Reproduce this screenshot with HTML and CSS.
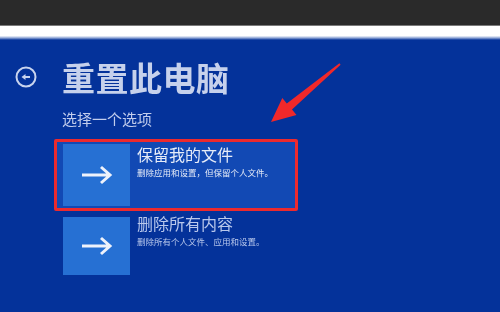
FILE: index.html
```html
<!DOCTYPE html>
<html lang="zh-CN">
<head>
    <meta charset="UTF-8">
    <meta name="viewport" content="width=device-width, initial-scale=1.0">
    <title>重置此电脑</title>
    <link rel="stylesheet" href="styles.css">
</head>
<body>

    <div class="topbar"></div>
    <div class="strip"></div>

    <div class="screen">
        <div class="header">
            <svg class="back" width="22" height="22" viewBox="0 0 22 22">
                <circle cx="11" cy="11" r="9.5" fill="none" stroke="#c9d4ee" stroke-width="2"/>
                <path d="M6.5 11 L10.5 8 L10.5 14 Z" fill="#c9d4ee"/>
                <path d="M9.5 11 H15" stroke="#c9d4ee" stroke-width="2"/>
            </svg>
            <h1 class="title">重置此电脑</h1>
        </div>
        <p class="subtitle">选择一个选项</p>

        <div class="option selected">
            <div class="tile">
                <svg width="34" height="20" viewBox="0 0 34 20">
                    <path d="M2 10 H30 M21 2 L30 10 L21 18" fill="none" stroke="#eef2fb" stroke-width="3"/>
                </svg>
            </div>
            <div class="option-text">
                <div class="option-title">保留我的文件</div>
                <div class="option-desc">删除应用和设置，但保留个人文件。</div>
            </div>
        </div>

        <div class="option second">
            <div class="tile">
                <svg width="34" height="20" viewBox="0 0 34 20">
                    <path d="M2 10 H30 M21 2 L30 10 L21 18" fill="none" stroke="#eef2fb" stroke-width="3"/>
                </svg>
            </div>
            <div class="option-text">
                <div class="option-title">删除所有内容</div>
                <div class="option-desc">删除所有个人文件、应用和设置。</div>
            </div>
        </div>
    </div>

    <!-- red pointer drawn over the screenshot -->
    <svg class="pointer" width="500" height="312" viewBox="0 0 500 312">
        <polygon points="271,122 282.3,98.1 286.8,103.4 339.4,63.2 340.6,64.8 292,109.6 296.5,114.9" fill="#f0282a"/>
    </svg>

</body>
</html>
```

FILE: styles.css
```css
body {
    margin: 0;
    width: 500px;
    height: 312px;
    overflow: hidden;
    position: relative;
    font-family: "Noto Sans CJK SC", "Noto Sans", sans-serif;
    background-color: #04329a;
}
.topbar {
    height: 25px;
    background: #2a2a2a;
    border-bottom: 1px solid #7a7a7a;
}
.strip {
    height: 14px;
    background: linear-gradient(to bottom, #ffffff 0%, #ffffff 70%, #8fa6d6 85%, #04329a 100%);
}
.screen {
    height: 272px;
    background: #04329a;
    color: #dfe6f6;
    filter: blur(0.5px);
}
.header {
    display: flex;
    align-items: center;
    height: 40px;
    padding-top: 17px;
    padding-left: 15px;
    gap: 25px;
}
.title {
    margin: 0;
    font-size: 33px;
    font-weight: 700;
    line-height: 40px;
    color: #c6d1ec;
    letter-spacing: 0.5px;
}
.subtitle {
    margin: 12px 0 0 62px;
    font-size: 15px;
    line-height: 20px;
    color: #c2cded;
}
.option {
    display: flex;
    align-items: flex-start;
    width: 244px;
    box-sizing: border-box;
    margin-left: 54px;
    padding: 2px 6px;
    border: 3px solid transparent;
}
.selected {
    margin-top: 10px;
    background: #1249b4;
    border-color: #ec2a2e;
    border-radius: 2px;
}
.second {
    margin-top: 1px;
}
.tile {
    width: 67px;
    height: 62px;
    flex-shrink: 0;
    display: flex;
    align-items: center;
    justify-content: center;
    background: #2670d3;
}
.second .tile {
    height: 58px;
}
.option-text {
    margin-left: 7px;
}
.second .option-text {
    margin-top: -4px;
}
.option-title {
    font-size: 16px;
    line-height: 20px;
    color: #e6ecf8;
}
.option-desc {
    margin-top: 2px;
    font-size: 8.5px;
    line-height: 12px;
    color: #e6ecf8;
    white-space: nowrap;
}
.second .option-title,
.second .option-desc {
    color: #b9c8ec;
}
.pointer {
    position: absolute;
    left: 0;
    top: 0;
    pointer-events: none;
}
```
